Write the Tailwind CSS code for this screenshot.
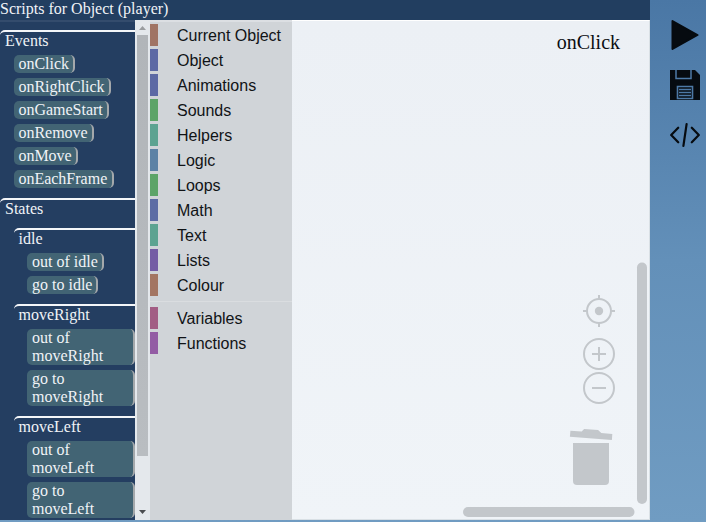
<!DOCTYPE html>
<html lang="en">
<head>
<meta charset="utf-8">
<title>Scripts</title>
<script src="https://cdn.jsdelivr.net/npm/@tailwindcss/browser@4"></script>
</head>
<body class="w-[706px] h-[522px] overflow-hidden flex bg-gradient-to-b from-[#4a77a5] via-[#6390b9] to-[#709cc2] font-['Liberation_Serif',serif] text-[16px] leading-[18px] text-[#f0f3f7]">
<main class="w-[650px] h-[520px] flex flex-col shrink-0">
  <header class="h-5 shrink-0 bg-[#223e60] whitespace-nowrap">Scripts for Object (player)</header>
  <div class="flex h-[500px]">
    <nav class="w-[135px] h-[500px] shrink-0 overflow-hidden bg-[#243e61] border-t-2 border-[#344c6d]">
      <section class="mt-2 border-t-2 border-[#f4f6f9] rounded-tl-[5px]">
        <h2 class="pl-[5px]">Events</h2>
        <ul class="pl-[14px] pt-[5px] flex flex-col items-start gap-[5px]">
          <li class="bg-[#426474] rounded-[5px] border-r-2 border-[#a4a8ab] px-[4.4px]">onClick</li>
          <li class="bg-[#426474] rounded-[5px] border-r-2 border-[#a4a8ab] px-[4.4px]">onRightClick</li>
          <li class="bg-[#426474] rounded-[5px] border-r-2 border-[#a4a8ab] px-[4.4px]">onGameStart</li>
          <li class="bg-[#426474] rounded-[5px] border-r-2 border-[#a4a8ab] px-[4.4px]">onRemove</li>
          <li class="bg-[#426474] rounded-[5px] border-r-2 border-[#a4a8ab] px-[4.4px]">onMove</li>
          <li class="bg-[#426474] rounded-[5px] border-r-2 border-[#a4a8ab] px-[4.4px]">onEachFrame</li>
        </ul>
      </section>
      <section class="mt-[10px] border-t-2 border-[#f4f6f9] rounded-tl-[5px]">
        <h2 class="pl-[5px]">States</h2>
      </section>
      <section class="mt-[10px] ml-[14px] border-t-2 border-[#f4f6f9] rounded-tl-[5px]">
        <h3 class="pl-[4.5px]">idle</h3>
        <ul class="pl-[13px] pt-[5px] flex flex-col items-start gap-[5px]">
          <li class="bg-[#426474] rounded-[5px] border-r-2 border-[#a4a8ab] pl-[5px] pr-[4px]">out of idle</li>
          <li class="bg-[#426474] rounded-[5px] border-r-2 border-[#a4a8ab] pl-[5px] pr-[4px]">go to idle</li>
        </ul>
      </section>
      <section class="mt-[10px] ml-[14px] border-t-2 border-[#f4f6f9] rounded-tl-[5px]">
        <h3 class="pl-[4.5px]">moveRight</h3>
        <ul class="pl-[13px] pt-[5px] flex flex-col gap-[5px]">
          <li class="bg-[#426474] rounded-[5px] border-r-2 border-[#a4a8ab] pl-[5px]">out of<br>moveRight</li>
          <li class="bg-[#426474] rounded-[5px] border-r-2 border-[#a4a8ab] pl-[5px]">go to<br>moveRight</li>
        </ul>
      </section>
      <section class="mt-[10px] ml-[14px] border-t-2 border-[#f4f6f9] rounded-tl-[5px]">
        <h3 class="pl-[4.5px]">moveLeft</h3>
        <ul class="pl-[13px] pt-[5px] flex flex-col gap-[5px]">
          <li class="bg-[#426474] rounded-[5px] border-r-2 border-[#a4a8ab] pl-[5px]">out of<br>moveLeft</li>
          <li class="bg-[#426474] rounded-[5px] border-r-2 border-[#a4a8ab] pl-[5px]">go to<br>moveLeft</li>
        </ul>
      </section>
    </nav>
    <div class="w-[15px] shrink-0 bg-[#e4e8ec] flex flex-col items-center">
      <svg class="w-[15px] h-[15px] shrink-0" viewBox="0 0 15 15"><path d="M4 10h7L7.500 6z" fill="#9a9da0"/></svg>
      <div class="w-[11px] h-[421px] bg-gradient-to-b from-[#b1b5b9] to-[#b9bdc1]"></div>
      <svg class="w-[15px] h-[15px] shrink-0 mt-auto" viewBox="0 0 15 15"><path d="M4 5h7L7.500 9z" fill="#4a4d50"/></svg>
    </div>
    <aside class="w-[142px] shrink-0 bg-[#d0d4d8] border-t-2 border-[#dcdfe3] font-['Liberation_Sans',sans-serif] text-[#101316] leading-[24px]">
      <div class="pt-[2px] flex flex-col gap-[3px]">
        <div class="flex gap-[19px] h-[22px] whitespace-nowrap"><i class="w-2 bg-[#a07464]"></i>Current Object</div>
        <div class="flex gap-[19px] h-[22px]"><i class="w-2 bg-[#5c69a4]"></i>Object</div>
        <div class="flex gap-[19px] h-[22px]"><i class="w-2 bg-[#5c69a4]"></i>Animations</div>
        <div class="flex gap-[19px] h-[22px]"><i class="w-2 bg-[#5ca468]"></i>Sounds</div>
        <div class="flex gap-[19px] h-[22px]"><i class="w-2 bg-[#5ca391]"></i>Helpers</div>
        <div class="flex gap-[19px] h-[22px]"><i class="w-2 bg-[#5c82a5]"></i>Logic</div>
        <div class="flex gap-[19px] h-[22px]"><i class="w-2 bg-[#5ca468]"></i>Loops</div>
        <div class="flex gap-[19px] h-[22px]"><i class="w-2 bg-[#5c6ca4]"></i>Math</div>
        <div class="flex gap-[19px] h-[22px]"><i class="w-2 bg-[#5ca391]"></i>Text</div>
        <div class="flex gap-[19px] h-[22px]"><i class="w-2 bg-[#745ca4]"></i>Lists</div>
        <div class="flex gap-[19px] h-[22px]"><i class="w-2 bg-[#a37562]"></i>Colour</div>
      </div>
      <hr class="mt-[5px] mb-[5px] border-t border-[#dadde0]">
      <div class="flex flex-col gap-[3px]">
        <div class="flex gap-[19px] h-[22px]"><i class="w-2 bg-[#a25d84]"></i>Variables</div>
        <div class="flex gap-[19px] h-[22px]"><i class="w-2 bg-[#935ca4]"></i>Functions</div>
      </div>
    </aside>
    <section class="w-[358px] shrink-0 bg-gradient-to-b from-[#ecf0f5] to-[#f0f4f8] border-t border-r border-b border-t-white border-r-[#d9e0e5] border-b-[#d9e0e5]">
      <svg class="block w-[357px] h-[498px]" viewBox="292 21 357 498">
        <text x="556.700" y="48.500" font-family="Liberation Serif, serif" font-size="20" fill="#0b0e12">onClick</text>
        <g fill="none" stroke="#c3c7cb" stroke-width="2">
          <circle cx="599" cy="311" r="12"/>
          <path d="M599 295v4M599 323v4M583 311h4M611 311h4"/>
          <circle cx="599" cy="354" r="15"/>
          <path d="M592 354h14M599 347v14"/>
          <circle cx="599" cy="388" r="15"/>
          <path d="M592 388h14"/>
        </g>
        <g fill="#c3c7cb">
          <circle cx="599" cy="311" r="4.200"/>
          <path d="M570.400 430.800l11.300.7 2.400-2.500 14 .9 3.200 3.200 11 .8-.4 6-42-3.100z"/>
          <path d="M573 443h36v38a4 4 0 0 1-4 4h-28a4 4 0 0 1-4-4z"/>
          <rect x="637" y="262.500" width="10" height="241.500" rx="5"/>
          <rect x="463" y="507" width="171.500" height="10" rx="5"/>
        </g>
      </svg>
    </section>
  </div>
</main>
<aside class="w-14 pl-5 pt-5 flex flex-col gap-5">
  <svg class="w-[30px] h-[30px]" viewBox="0 0 30 30"><path d="M2.500 1L27.500 15 2.500 29z" fill="#060b10" stroke="#060b10" stroke-width="2" stroke-linejoin="round"/></svg>
  <svg class="w-[30px] h-[30px]" viewBox="0 0 30 30"><path d="M0 0h25l5 5v25H0z" fill="#060b10"/><path d="M6 0v8.500h15V0" fill="none" stroke="#4d79a5" stroke-width="1.500"/><path d="M7.500 16.500h15v12h-15z" fill="none" stroke="#4d79a5" stroke-width="1.600"/><path d="M9 19.500h12M9 22.500h12M9 25.500h12" stroke="#4d79a5" stroke-width="1.300"/></svg>
  <svg class="w-[30px] h-[30px]" viewBox="0 0 30 30" fill="none" stroke="#060b10" stroke-width="2.200" stroke-linecap="round" stroke-linejoin="round"><path d="M8.200 7.700L1.200 15l7 7.300M21.800 7.700l7 7.300-7 7.300M16.600 4.200l-3.200 21.600"/></svg>
</aside>
</body>
</html>
